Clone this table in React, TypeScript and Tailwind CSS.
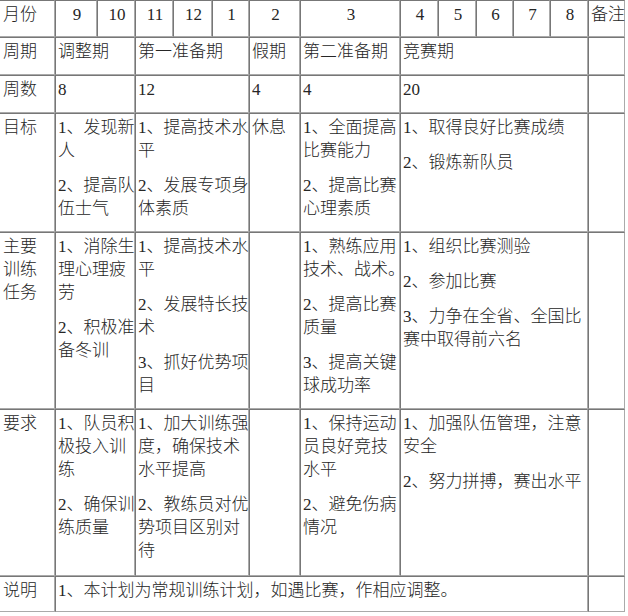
import React from "react";

type Paras = string[][];

const base =
  "border border-t-[#777777] border-l-[#777777] border-r-[#aaaaaa] border-b-[#aaaaaa] pt-[2px] pl-[2px] whitespace-nowrap overflow-visible";

function Cell({
  span = "",
  paras = [],
  center = false,
  first = false,
}: {
  span?: string;
  paras?: Paras;
  center?: boolean;
  first?: boolean;
}) {
  return (
    <div
      className={`${base} ${span} ${first ? "border-l-0 pl-[3px]" : ""} ${
        center ? "text-center pl-0" : ""
      }`}
    >
      <div className="flex flex-col gap-[12px]">
        {paras.map((p, i) => (
          <div key={i} className="leading-[23px]">
            {p.map((l, j) => (
              <div key={j}>{l}</div>
            ))}
          </div>
        ))}
      </div>
    </div>
  );
}

type Row = {
  label: string[];
  c1: Paras;
  c2: Paras;
  c3: Paras;
  c4: Paras;
  c5: Paras;
};

const rows: Row[] = [
  {
    label: ["周期"],
    c1: [["调整期"]],
    c2: [["第一准备期"]],
    c3: [["假期"]],
    c4: [["第二准备期"]],
    c5: [["竞赛期"]],
  },
  {
    label: ["周数"],
    c1: [["8"]],
    c2: [["12"]],
    c3: [["4"]],
    c4: [["4"]],
    c5: [["20"]],
  },
  {
    label: ["目标"],
    c1: [
      ["1、发现新", "人"],
      ["2、提高队", "伍士气"],
    ],
    c2: [
      ["1、提高技术水", "平"],
      ["2、发展专项身", "体素质"],
    ],
    c3: [["休息"]],
    c4: [
      ["1、全面提高", "比赛能力"],
      ["2、提高比赛", "心理素质"],
    ],
    c5: [["1、取得良好比赛成绩"], ["2、锻炼新队员"]],
  },
  {
    label: ["主要", "训练", "任务"],
    c1: [
      ["1、消除生", "理心理疲", "劳"],
      ["2、积极准", "备冬训"],
    ],
    c2: [
      ["1、提高技术水", "平"],
      ["2、发展特长技", "术"],
      ["3、抓好优势项", "目"],
    ],
    c3: [],
    c4: [
      ["1、熟练应用", "技术、战术。"],
      ["2、提高比赛", "质量"],
      ["3、提高关键", "球成功率"],
    ],
    c5: [
      ["1、组织比赛测验"],
      ["2、参加比赛"],
      ["3、力争在全省、全国比", "赛中取得前六名"],
    ],
  },
  {
    label: ["要求"],
    c1: [
      ["1、队员积", "极投入训", "练"],
      ["2、确保训", "练质量"],
    ],
    c2: [
      ["1、加大训练强", "度，确保技术", "水平提高"],
      ["2、教练员对优", "势项目区别对", "待"],
    ],
    c3: [],
    c4: [
      ["1、保持运动", "员良好竞技", "水平"],
      ["2、避免伤病", "情况"],
    ],
    c5: [["1、加强队伍管理，注意", "安全"], ["2、努力拼搏，赛出水平"]],
  },
];

const months = ["9", "10", "11", "12", "1", "2", "3", "4", "5", "6", "7", "8"];

export default function App() {
  return (
    <div
      className="w-[628px] h-[616px] bg-white text-[#262626] text-[17px] font-light overflow-hidden"
      style={{ fontFamily: '"Liberation Serif", "Noto Sans CJK SC", serif' }}
    >
      <div className="grid w-[625px] grid-cols-[55px_42px_38px_38px_39px_37px_51px_100px_38px_38px_37px_37px_38px_37px] grid-rows-[37px_38px_38px_119px_177px_167px_36px]">
        <Cell first paras={[["月份"]]} />
        {months.map((m, i) => (
          <Cell key={i} center paras={[[m]]} />
        ))}
        <Cell paras={[["备注"]]} />

        {rows.map((r, i) => (
          <React.Fragment key={i}>
            <Cell first paras={[r.label]} />
            <Cell span="col-span-2" paras={r.c1} />
            <Cell span="col-span-3" paras={r.c2} />
            <Cell paras={r.c3} />
            <Cell paras={r.c4} />
            <Cell span="col-span-5" paras={r.c5} />
            <Cell />
          </React.Fragment>
        ))}

        <Cell first paras={[["说明"]]} />
        <Cell
          span="col-span-12"
          paras={[["1、本计划为常规训练计划，如遇比赛，作相应调整。"]]}
        />
        <Cell />
      </div>
    </div>
  );
}
